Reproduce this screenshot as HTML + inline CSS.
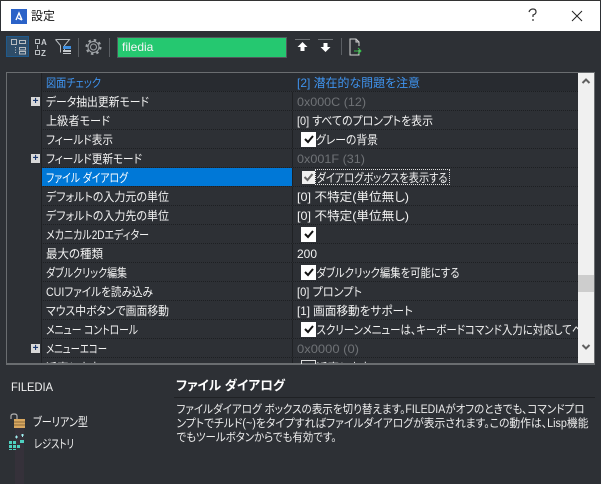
<!DOCTYPE html>
<html lang="ja">
<head>
<meta charset="utf-8">
<style>
html,body{margin:0;padding:0;background:#2d3035}
#w{position:relative;width:601px;height:484px;overflow:hidden;background:#2d3035;font-family:"Liberation Sans","Noto Sans CJK JP",sans-serif;font-size:12px;color:#f2f2f2;white-space:nowrap;font-feature-settings:"palt"}
#w div,#w svg{position:absolute}
.h{background:#2d3035;height:1px;border-top:1px dotted #1d1f22;left:41px;width:537px;box-sizing:border-box}
.c{width:15px;height:15px;background:#fff;left:301px}
.p{left:31px;width:9px;height:9px;background:#d8d8d8;border:0;color:#1c3a70;font:bold 10px/9px "Liberation Sans",sans-serif;text-align:center}
#tx text{fill:#f2f2f2;font-size:12px;white-space:pre}
#tx text.g{fill:#6f7276}
#tx text.b{fill:#3f94f0}
#tx text.d{font-size:11.5px;fill:#ececec}
</style>
</head>
<body>
<div id="w">
<div style="left:0;top:0;width:601px;height:1px;background:#333"></div>
<div style="left:1px;top:1px;width:599px;height:30px;background:#fff"></div>
<div style="left:11px;top:9px;width:16px;height:15px;background:#2a62c8"></div>
<svg style="left:11px;top:9px" width="16" height="15"><path d="M5 11 L8 4 L11 11 M7 9 L11 11" stroke="#fff" stroke-width="1.4" fill="none"/></svg>
<div style="left:31px;top:7px;line-height:18px;color:#111;font-size:12px">設定</div>
<svg style="left:525px;top:6px" width="60" height="20"><path d="M4 6 Q5 3 8 3 Q11 3 11 6 Q11 8 8 9 L8 11 M8 13 V15" stroke="#333" stroke-width="1.2" fill="none"/><path d="M47 5 L57 15 M57 5 L47 15" stroke="#222" stroke-width="1" fill="none"/></svg>

<!-- toolbar -->
<div style="left:6px;top:36px;width:23px;height:21px;background:#2e4d69;border:1px solid #1f5a8c;box-sizing:border-box"></div>
<svg style="left:6px;top:36px" width="110" height="22" fill="none" stroke="#b8bcc0" stroke-width="1">
<rect x="5.500" y="3.500" width="5" height="5"/><path d="M13.500 4.500h6v3h-6z"/><path d="M9 11.500h1M9 14h1M9 16.500h1"/><path d="M13.500 11.500h6v2.500h-6zM13.500 15.500h6v2.500h-6z"/>
<rect x="29.500" y="3.500" width="4" height="4"/><rect x="29.500" y="14.500" width="4" height="4"/><path d="M31.500 9v4"/>
<path d="M49.500 3.500h14l-5 6v5M54.500 9.500l-5-6M54.500 9.500v7"/>
<path d="M72.500 2v19M103.500 2v19" stroke="#5a5e63"/>
</svg>
<div style="left:63px;top:46px;width:8px;height:3px;background:#3f8fe0"></div>
<div style="left:63px;top:50px;width:8px;height:2px;background:#c4c8cc"></div>
<div style="left:63px;top:53px;width:8px;height:1px;background:#c4c8cc"></div>
<div style="left:41px;top:38px;font-size:8px;font-weight:bold;color:#c8ccd0;line-height:9px;font-family:'Liberation Sans',sans-serif">A</div>
<div style="left:41px;top:49px;font-size:8px;font-weight:bold;color:#c8ccd0;line-height:9px;font-family:'Liberation Sans',sans-serif">Z</div>
<svg style="left:84px;top:36px" width="20" height="22" fill="none" stroke="#a0a4a8"><circle cx="9.500" cy="11" r="3"/><circle cx="9.500" cy="11" r="5.500"/><circle cx="9.500" cy="11" r="7" stroke-dasharray="2.500 3" stroke-width="2"/></svg>

<div style="left:117px;top:37px;width:170px;height:21px;background:#25c870;border:1px solid #53585c;box-sizing:border-box"></div>
<div style="left:122px;top:37px;color:#f4f4f4;font-size:12px;line-height:20px">filedia</div>

<svg style="left:294px;top:38px" width="75" height="22">
<path d="M1 1.500h15M24 1.500h15" stroke="#6d7175"/>
<path d="M8.500 4l5 5h-3v4h-4V9h-3zM31.500 14l5-5h-3V5h-4v4h-3z" fill="#fff"/>
<path d="M47.500 0v17" stroke="#5a5e63"/>
<path d="M64 12v5h-9V1h6l3 3v4M61 1v3h3" fill="none" stroke="#d4d4d4" transform="translate(1,0)"/>
<path d="M60 13h7M64 10l3 3-3 3" fill="none" stroke="#38c24a"/>
</svg>

<!-- grid -->
<div style="left:41px;top:73px;width:1px;height:290px;background:#1f2124"></div>
<div style="left:292px;top:73px;width:1px;height:290px;background:#1f2124"></div>
<div style="left:42px;top:73px;width:536px;height:18px;background:#282b30"></div>

<div class="h" style="top:91px"></div><div class="h" style="top:110px"></div><div class="h" style="top:129px"></div><div class="h" style="top:148px"></div><div class="h" style="top:167px"></div><div class="h" style="top:186px"></div><div class="h" style="top:205px"></div><div class="h" style="top:224px"></div><div class="h" style="top:243px"></div><div class="h" style="top:262px"></div><div class="h" style="top:281px"></div><div class="h" style="top:300px"></div><div class="h" style="top:319px"></div><div class="h" style="top:338px"></div><div class="h" style="top:357px"></div>

<div style="left:42px;top:168px;width:250px;height:18px;background:#0078d7"></div>

<svg id="tx" style="left:0;top:0" width="601" height="484">
<g lengthAdjust="spacingAndGlyphs">
<text class="b" x="46" y="87" textLength="55" lengthAdjust="spacingAndGlyphs">図面チェック</text>
<text x="46" y="106" textLength="103" lengthAdjust="spacingAndGlyphs">データ抽出更新モード</text>
<text x="46" y="125" textLength="64" lengthAdjust="spacingAndGlyphs">上級者モード</text>
<text x="46" y="144" textLength="67" lengthAdjust="spacingAndGlyphs">フィールド表示</text>
<text x="46" y="163" textLength="96" lengthAdjust="spacingAndGlyphs">フィールド更新モード</text>
<text x="46" y="182" textLength="82" lengthAdjust="spacingAndGlyphs" style="fill:#fff">ファイル ダイアログ</text>
<text x="46" y="201" textLength="123" lengthAdjust="spacingAndGlyphs">デフォルトの入力元の単位</text>
<text x="46" y="220" textLength="123" lengthAdjust="spacingAndGlyphs">デフォルトの入力先の単位</text>
<text x="46" y="239" textLength="103" lengthAdjust="spacingAndGlyphs">メカニカル2Dエディター</text>
<text x="46" y="258" textLength="57" lengthAdjust="spacingAndGlyphs">最大の種類</text>
<text x="46" y="277" textLength="81" lengthAdjust="spacingAndGlyphs">ダブルクリック編集</text>
<text x="46" y="296" textLength="107" lengthAdjust="spacingAndGlyphs">CUIファイルを読み込み</text>
<text x="46" y="315" textLength="123" lengthAdjust="spacingAndGlyphs">マウス中ボタンで画面移動</text>
<text x="46" y="334" textLength="92" lengthAdjust="spacingAndGlyphs">メニュー コントロール</text>
<text x="46" y="353" textLength="61" lengthAdjust="spacingAndGlyphs">メニューエコー</text>
<text x="46" y="372" textLength="55" lengthAdjust="spacingAndGlyphs">近声と出力</text>

<text class="b" x="297" y="87" textLength="123" lengthAdjust="spacingAndGlyphs">[2] 潜在的な問題を注意</text>
<text class="g" x="297" y="106" textLength="69" lengthAdjust="spacingAndGlyphs">0x000C (12)</text>
<text x="297" y="125" textLength="136" lengthAdjust="spacingAndGlyphs">[0] すべてのプロンプトを表示</text>
<text x="316" y="144" textLength="62" lengthAdjust="spacingAndGlyphs">グレーの背景</text>
<text class="g" x="297" y="163" textLength="68" lengthAdjust="spacingAndGlyphs">0x001F (31)</text>
<text x="316.500" y="182" textLength="131" lengthAdjust="spacingAndGlyphs">ダイアログボックスを表示する</text>
<text x="297" y="201" textLength="112" lengthAdjust="spacingAndGlyphs">[0] 不特定(単位無し)</text>
<text x="297" y="220" textLength="112" lengthAdjust="spacingAndGlyphs">[0] 不特定(単位無し)</text>
<text x="297" y="258" textLength="20" lengthAdjust="spacingAndGlyphs">200</text>
<text x="316.500" y="277" textLength="143" lengthAdjust="spacingAndGlyphs">ダブルクリック編集を可能にする</text>
<text x="297" y="296" textLength="65" lengthAdjust="spacingAndGlyphs">[0] プロンプト</text>
<text x="297" y="315" textLength="116" lengthAdjust="spacingAndGlyphs">[1] 画面移動をサポート</text>
<text x="316.500" y="334" textLength="266" lengthAdjust="spacingAndGlyphs">スクリーンメニューは、キーボードコマンド入力に対応してペ</text>
<text class="g" x="297" y="353" textLength="62" lengthAdjust="spacingAndGlyphs">0x0000 (0)</text>
<text x="316.500" y="372" textLength="55" lengthAdjust="spacingAndGlyphs">近声と出力</text>

<text x="11" y="391" textLength="42" lengthAdjust="spacingAndGlyphs">FILEDIA</text>
<text x="33" y="426" textLength="55" lengthAdjust="spacingAndGlyphs">ブーリアン型</text>
<text x="34" y="448" textLength="40" lengthAdjust="spacingAndGlyphs">レジストリ</text>
<text x="176" y="390" textLength="109" lengthAdjust="spacingAndGlyphs" style="font-size:13px;font-weight:bold;fill:#fff">ファイル ダイアログ</text>
<text class="d" x="176.500" y="413" textLength="408" lengthAdjust="spacingAndGlyphs">ファイルダイアログ ボックスの表示を切り替えます。FILEDIAがオフのときでも、コマンドプロ</text>
<text class="d" x="176.500" y="427" textLength="412" lengthAdjust="spacingAndGlyphs">ンプトでチルド(~)をタイプすればファイルダイアログが表示されます。この動作は、Lisp機能</text>
<text class="d" x="176.500" y="441" textLength="160" lengthAdjust="spacingAndGlyphs">でもツールボタンからでも有効です。</text>
</g>
</svg>

<div style="left:316px;top:170px;width:133px;height:14px;outline:1px dotted #ddd"></div>

<!-- cover clipped last row below grid -->
<div style="left:0;top:363px;width:601px;height:12px;background:#2d3035"></div>
<div style="left:6px;top:72px;width:589px;height:293px;border:1px solid #6a6d70;box-sizing:border-box;border-bottom-width:2px"></div>

<div class="p" style="top:97px">+</div>
<div class="p" style="top:154px">+</div>
<div class="p" style="top:344px">+</div>

<div class="c" style="top:132px"></div><div class="c" style="top:227px"></div><div class="c" style="top:265px"></div><div class="c" style="top:322px"></div>
<div class="c" style="top:171px;left:302px;width:13px;height:13px;background:#f0f0f0"></div>
<div style="left:301px;top:360px;width:13px;height:3px;border:1px solid #ddd;border-bottom:0"></div>
<svg style="left:301px;top:132px" width="15" height="210" fill="none" stroke="#111" stroke-width="2">
<path d="M4 7l3 3 5-6M4 102l3 3 5-6M4 140l3 3 5-6M4 197l3 3 5-6"/>
<path d="M3.500 45l3 3 5-6" stroke="#666"/>
</svg>

<!-- scrollbar -->
<div style="left:578px;top:73px;width:16px;height:290px;background:#f0f0f0"></div>
<div style="left:578px;top:275px;width:16px;height:17px;background:#cdcdcd"></div>
<svg style="left:578px;top:73px" width="16" height="290" fill="none" stroke="#606060" stroke-width="2"><path d="M4.500 10l3.500-3.500 3.500 3.500M4.500 272l3.500 3.500 3.500-3.500"/></svg>

<!-- bottom -->
<div style="left:15px;top:428px;width:9px;height:56px;background:#35313a"></div>
<svg style="left:8px;top:412px" width="20" height="20"><path d="M3 7V4q0-2 3-2t3 2v3" stroke="#b0b0b0" fill="none" stroke-width="1.200"/><rect x="6" y="7" width="11" height="9" fill="#d9a860"/><path d="M6 10h11M6 13h11" stroke="#8a6a3a"/></svg>
<svg style="left:8px;top:434px" width="18" height="18"><path d="M1 7h3v3H1zM5 7h3v3H5zM1 11h3v3H1zM5 11h3v3H5zM9 11h3v3H9zM1 15h3v1H1zM5 15h3v1H5zM12 6h4v3h-4z" fill="#4fd0c0"/><path d="M7 3h3M8.500 1.500v3M13 1h3M14.500 0v3" stroke="#a0f0f0"/></svg>
<div style="left:174px;top:397px;width:421px;height:1px;background:#1f2124"></div>
</div>
</body>
</html>
